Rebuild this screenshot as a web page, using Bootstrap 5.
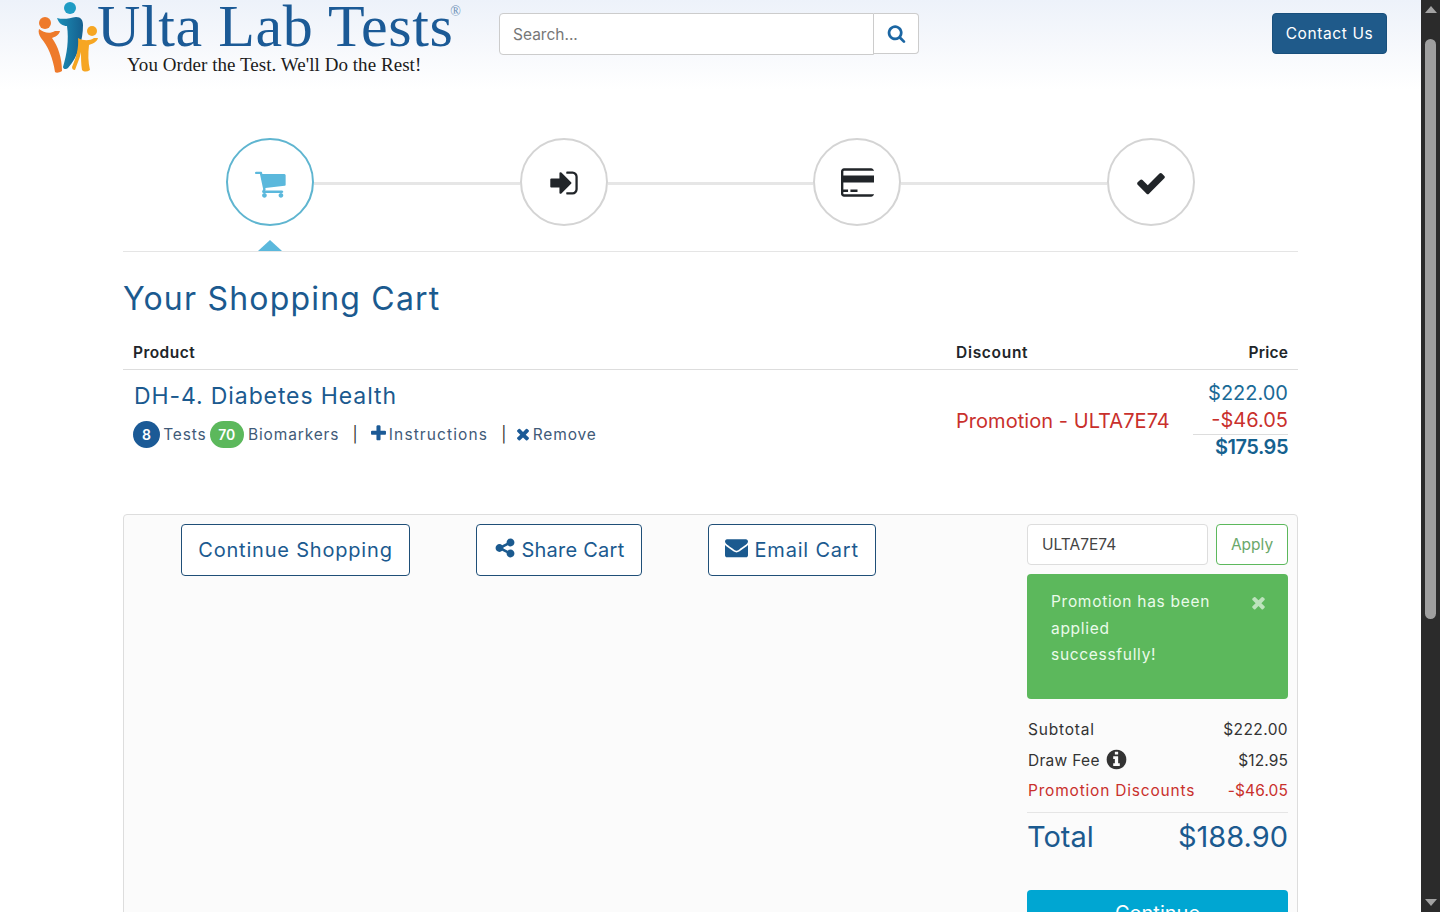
<!DOCTYPE html>
<html lang="en">
<head>
<meta charset="utf-8">
<title>Your Shopping Cart</title>
<link href="https://cdn.jsdelivr.net/npm/bootstrap@5.3.0/dist/css/bootstrap.min.css" rel="stylesheet">
<style>
html,body{height:912px;overflow:hidden}
body{font-family:Inter,"Noto Sans",sans-serif;background:#fff;color:#212529;font-size:16px}
svg.ico{fill:currentColor;display:inline-block;vertical-align:-2px}
.page-wrap{width:1421px}
.top-bar{height:90px;padding:13px 34px 0 38px;background:linear-gradient(#edf2fa,#f6f8fc 50%,#fff)}
.logo-box{width:461px;height:76px;margin-top:-13px;flex:none}
.logo-mark{width:60px;height:72px;margin-top:2px;flex:none}
.logo-words{font-family:"Liberation Serif",serif;margin-left:-1px}
.logo-name{font-size:60px;line-height:52px;color:#1b5a96;letter-spacing:.6px;white-space:nowrap}
.logo-name sup{font-size:14px;top:-30px;vertical-align:baseline;position:relative;margin-left:-3px;color:#6b8fb5}
.logo-tag{font-size:19px;line-height:20px;color:#1c1c1c;margin-left:30px;margin-top:3px;white-space:nowrap;letter-spacing:.05px}
.find-box{width:420px}
.find-box input{height:42px;font-size:15.5px;border-color:#ccc;border-radius:4px 0 0 4px;padding-left:13px;box-shadow:none}
.find-box input::placeholder{color:#777}
.find-btn{width:45px;height:41px;border:1px solid #ccc;border-left:0;background:#fff;border-radius:0 4px 4px 0;color:#1b66a3;padding:3px 0 0}
.contact-btn{width:115px;height:41px;background:#1f5a8a;border:1px solid #184f7c;color:#fff;font-size:15.5px;border-radius:4px;padding:0;letter-spacing:.6px}
.cart-wrap{width:1175px;margin:0 auto}
.step-row{padding:48px 103px 25px;border-bottom:1px solid #e5e5e5}
.step-dot{width:88px;height:88px;flex:none;border-radius:50%;border:2px solid #d4d4d4;background:#fff;color:#212529}
.step-dot.on{border-color:#5fb5d0;color:#5bb8dc}
.step-line{flex:1;height:3px;background:#e6e6e6;margin-top:2px}
.step-tip{position:absolute;left:30px;top:100px;width:0;height:0;border-left:12px solid transparent;border-right:12px solid transparent;border-bottom:11px solid #5bb8dc}
.cart-icon{margin-left:2px;margin-top:2px}
.step-ico{margin-top:2px}
.cart-title{font-size:32px;line-height:40px;color:#1b5a8f;font-weight:400;margin:27px 0 0;letter-spacing:1.2px}
.cart-table{margin:0;--bs-table-bg:transparent}
.cart-table th{font-size:15.5px;font-weight:600;padding:21px 10px 4px;line-height:25px;border-bottom:1px solid #ddd;color:#212529;letter-spacing:.45px}
.cart-table td{border:0;padding:10px;vertical-align:top}
.cart-table th.head-disc{width:247px;letter-spacing:.7px}
.cart-table th.head-price{width:105px;letter-spacing:.2px}
.prod-name{font-size:23px;line-height:32px;color:#1b5a8f;letter-spacing:.9px;padding-left:1px}
.meta-line{font-size:15.5px;color:#3f5a78;margin-top:9px;line-height:27px;letter-spacing:.85px;white-space:nowrap}
.meta-line a{color:#3f5a78;text-decoration:none}
.meta-line a.wide-link{letter-spacing:1.1px}
.meta-line svg{color:#1b5a96}
.count-pill{display:inline-block;height:27px;line-height:27px;min-width:27px;border-radius:14px;color:#fff;font-size:14px;font-weight:600;text-align:center;padding:0 8px;letter-spacing:0}
.pill-blue{background:#1b5a96;margin-right:-2px}
.pill-green{background:#5cb85c;width:34px;padding:0;margin-left:-2px;margin-right:-1px}
.bar-sep{margin:0 5px 0 8px;color:#333;letter-spacing:0}
.plus-ico{vertical-align:-3px!important;margin-left:1px;margin-right:1px}
.cross-ico{margin-left:-3px;margin-right:-4px;vertical-align:-3px!important}
.cart-table td.promo-name{color:#c9302c;font-size:20px;letter-spacing:.05px;padding-left:10px;vertical-align:middle;white-space:nowrap}
.cart-table td.price-stack{font-size:20px;line-height:27px;text-align:right;color:#1b6a96}
.price-stack .cut{color:#c9302c;border-bottom:1px solid #ddd;margin-left:-10px}
.price-stack b{font-weight:600;color:#15618f;letter-spacing:-.5px;display:block;margin-top:-1px}
.action-box{height:600px;margin-top:43px;background:#fbfbfb;border:1px solid #ddd;border-radius:4px 4px 0 0;padding:9px 9px 0 0}
.left-actions{padding-left:57px;gap:66px;flex:1}
.act-btn{height:52px;border:1px solid #1f4f78;border-radius:4px;background:#fff;color:#1b5a8f;font-size:20px;line-height:50px;padding:0;text-align:center;letter-spacing:.8px;white-space:nowrap}
.act-tight{letter-spacing:.25px}
.btn-w1{width:229px}
.btn-w2{width:166px}
.btn-w3{width:168px}
.side-col{width:261px;flex:none}
.code-input{width:181px;height:41px;font-size:15.5px;border-color:#ddd;border-radius:4px;padding-left:14px;color:#444;box-shadow:none}
.apply-btn{width:72px;height:41px;background:#fff;border:1px solid #5cb85c;border-radius:4px;color:#6aa86a;padding:0;font-size:15.5px}
.promo-alert{background:#5cb85c;color:#eafbea;border-radius:4px;margin-top:9px;height:125px;padding:15px 24px;font-size:15.5px;line-height:26.500px;letter-spacing:.7px}
.promo-alert .msg{width:175px}
.promo-x{color:#bde3bd;margin-top:4px;margin-right:-4px}
.sum-line{font-size:15.5px;line-height:24px;color:#333;padding-left:1px;letter-spacing:.8px}
.sum-line span:last-child{letter-spacing:.4px}
.sum-first{margin-top:19px}
.sum-draw{margin-top:6px;letter-spacing:.3px}
.sum-line.sum-draw span:last-child,.sum-line.sum-red span:last-child{letter-spacing:.1px}
.sum-draw span:first-child{letter-spacing:.3px}
.sum-red{color:#c9302c;margin-top:6px}
.sum-rule{border-top:1px solid #e5e5e5;margin-top:9px}
.sum-total{font-size:29px;line-height:48px;color:#1b5a8f}
.go-btn{height:60px;width:261px;margin-top:29px;background:#00a6d2;color:#fff;border:0;border-radius:4px;font-size:20px;padding:0 0 14px;display:block}
.info-ico{vertical-align:-5px!important;margin-left:1px}
.scroll-track{position:fixed;right:0;top:0;width:19px;height:912px;background:#2b2b2b}
.scroll-thumb{position:absolute;left:4px;right:4px;top:39px;height:580px;background:#9f9f9f;border-radius:6px}
.scroll-up,.scroll-down{position:absolute;left:4px;width:0;height:0;border-left:6px solid transparent;border-right:6px solid transparent}
.scroll-up{top:6px;border-bottom:7px solid #a3a3a3}
.scroll-down{bottom:6px;border-top:7px solid #a3a3a3}
</style>
</head>
<body>
<div class="page-wrap">
  <header class="top-bar d-flex align-items-start">
    <div class="logo-box d-flex">
      <svg class="logo-mark" viewBox="0 0 60 72" aria-hidden="true">
        <defs><linearGradient id="blueFig" x1="0" y1="0" x2="1" y2="0"><stop offset="0" stop-color="#1c8fb8"/><stop offset="1" stop-color="#155f8e"/></linearGradient></defs>
        <circle cx="7" cy="21" r="6" fill="#ee7a2b"/>
        <path d="M1 27C6 31 12 32 17 29L22 29C21 33 17 35 14 36 20 44 24 56 24 69 21 71 18 71 17 70 15 56 10 44 3 36 1 33 0 30 1 27Z" fill="#ee7a2b"/>
        <circle cx="32" cy="6" r="6" fill="#1f9cc4"/>
        <path d="M19 16C26 18 32 16 38 15 43 15 45 18 45 23 45 38 40 55 30 66 28 68 25 67 25 65 29 52 31 38 29 24 25 24 21 22 19 16Z" fill="url(#blueFig)"/>
        <circle cx="54" cy="29" r="5" fill="#f6a623"/>
        <path d="M40 36C45 39 52 39 56 36L60 36C59 40 54 42 51 43 50 52 50 60 52 68 49 70 46 70 44 68 43 62 43 56 43 50 42 56 39 62 37 68 35 68 34 67 34 65 38 56 41 46 40 36Z" fill="#f6a623"/>
      </svg>
      <div class="logo-words">
        <div class="logo-name">Ulta Lab Tests<sup>®</sup></div>
        <div class="logo-tag">You Order the Test. We'll Do the Rest!</div>
      </div>
    </div>
    <div class="find-box d-flex">
      <input class="form-control" type="text" placeholder="Search...">
      <button class="find-btn flex-shrink-0" type="button" aria-label="Search">
        <svg class="ico" width="19" height="19" viewBox="0 0 1792 1792"><path d="M1216 832q0-185-131.500-316.500t-316.500-131.500-316.500 131.500-131.500 316.500 131.500 316.500 316.500 131.500 316.500-131.500 131.500-316.500zm512 832q0 52-38 90t-90 38q-54 0-90-38l-343-342q-179 124-399 124-143 0-273.500-55.500t-225-150-150-225-55.500-273.500 55.500-273.500 150-225 225-150 273.500-55.500 273.500 55.500 225 150 150 225 55.500 273.500q0 220-124 399l343 343q37 37 37 90z"/></svg>
      </button>
    </div>
    <button class="contact-btn ms-auto" type="button">Contact Us</button>
  </header>

  <main class="cart-wrap">
    <div class="step-row d-flex align-items-center position-relative">
      <div class="step-dot on d-flex align-items-center justify-content-center position-relative">
        <svg class="cart-icon" width="33" height="33" viewBox="0 0 1792 1792" fill="currentColor"><path d="M640 1536q0 52-38 90t-90 38-90-38-38-90 38-90 90-38 90 38 38 90zm896 0q0 52-38 90t-90 38-90-38-38-90 38-90 90-38 90 38 38 90zm128-1088v512q0 24-16.500 42.500t-40.500 21.500l-1044 122q13 60 13 70 0 16-24 64h920q26 0 45 19t19 45-19 45-45 19h-1024q-26 0-45-19t-19-45q0-11 8-31.500t16-36 21.500-40 15.500-29.500l-177-823h-204q-26 0-45-19t-19-45 19-45 45-19h256q16 0 28.500 6.500t19.500 15.500 13 24.500 8 26 5.500 29.500 4.500 26h1201q26 0 45 19t19 45z"/></svg>
        <span class="step-tip"></span>
      </div>
      <div class="step-line"></div>
      <div class="step-dot d-flex align-items-center justify-content-center">
        <svg class="step-ico" width="32" height="32" viewBox="0 0 1792 1792" fill="currentColor"><path d="M1312 896q0 26-19 45l-544 544q-19 19-45 19t-45-19-19-45v-288h-448q-26 0-45-19t-19-45v-384q0-26 19-45t45-19h448v-288q0-26 19-45t45-19 45 19l544 544q19 19 19 45zm352-352v704q0 119-84.500 203.500t-203.500 84.500h-320q-13 0-22.500-9.500t-9.500-22.500q0-4-1-20t-.5-26.500 3-23.500 10-19.500 20.500-6.500h320q66 0 113-47t47-113v-704q0-66-47-113t-113-47h-312l-11.500-1-11.500-3-8-5.500-7-9-2-13.500q0-4-1-20t-.5-26.500 3-23.500 10-19.500 20.500-6.500h320q119 0 203.500 84.500t84.500 203.500z"/></svg>
      </div>
      <div class="step-line"></div>
      <div class="step-dot d-flex align-items-center justify-content-center">
        <svg width="33" height="33" viewBox="0 0 1792 1792" fill="currentColor"><path d="M1632 128q66 0 113 47t47 113v1216q0 66-47 113t-113 47h-1472q-66 0-113-47t-47-113v-1216q0-66 47-113t113-47h1472zm-1472 128q-13 0-22.500 9.500t-9.500 22.500v224h1664v-224q0-13-9.500-22.500t-22.500-9.500h-1600zm1600 1280q13 0 22.500-9.500t9.500-22.500v-608h-1664v608q0 13 9.500 22.500t22.500 9.500h1600zm-1632-128v-128h256v128h-256zm384 0v-128h384v128h-384z"/></svg>
      </div>
      <div class="step-line"></div>
      <div class="step-dot d-flex align-items-center justify-content-center">
        <svg class="step-ico" width="32" height="32" viewBox="0 0 1792 1792" fill="currentColor"><path d="M1671 566q0 40-28 68l-724 724-136 136q-28 28-68 28t-68-28l-136-136-362-362q-28-28-28-68t28-68l136-136q28-28 68-28t68 28l294 295 656-657q28-28 68-28t68 28l136 136q28 28 28 68z"/></svg>
      </div>
    </div>

    <h1 class="cart-title">Your Shopping Cart</h1>

    <table class="table cart-table">
      <thead>
        <tr><th>Product</th><th class="head-disc">Discount</th><th class="text-end head-price">Price</th></tr>
      </thead>
      <tbody>
        <tr>
          <td>
            <div class="prod-name">DH-4. Diabetes Health</div>
            <div class="meta-line">
              <span class="count-pill pill-blue">8</span> Tests <span class="count-pill pill-green">70</span> Biomarkers
              <span class="bar-sep">|</span>
              <a class="wide-link" href="#"><svg class="ico plus-ico" width="19" height="19" viewBox="0 0 1792 1792"><path d="M1600 736v192q0 40-28 68t-68 28h-416v416q0 40-28 68t-68 28h-192q-40 0-68-28t-28-68v-416h-416q-40 0-68-28t-28-68v-192q0-40 28-68t68-28h416v-416q0-40 28-68t68-28h192q40 0 68 28t28 68v416h416q40 0 68 28t28 68z"/></svg>Instructions</a>
              <span class="bar-sep">|</span>
              <a href="#"><svg class="ico cross-ico" width="18" height="18" viewBox="0 0 1792 1792"><path d="M1490 1322q0 40-28 68l-136 136q-28 28-68 28t-68-28l-294-294-294 294q-28 28-68 28t-68-28l-136-136q-28-28-28-68t28-68l294-294-294-294q-28-28-28-68t28-68l136-136q28-28 68-28t68 28l294 294 294-294q28-28 68-28t68 28l136 136q28 28 28 68t-28 68l-294 294 294 294q28 28 28 68z"/></svg> Remove</a>
            </div>
          </td>
          <td class="promo-name">Promotion - ULTA7E74</td>
          <td class="price-stack"><div>$222.00</div><div class="cut">-$46.05</div><div><b>$175.95</b></div></td>
        </tr>
      </tbody>
    </table>

    <section class="action-box d-flex align-items-start">
      <div class="left-actions d-flex">
        <a class="act-btn btn-w1 text-decoration-none" href="#">Continue Shopping</a>
        <a class="act-btn act-tight btn-w2 text-decoration-none" href="#"><svg class="ico" width="22" height="22" viewBox="0 0 1792 1792"><path d="M1344 1024q133 0 226.500 93.500t93.500 226.500-93.500 226.500-226.500 93.500-226.500-93.500-93.500-226.500q0-12 2-34l-360-180q-92 86-218 86-133 0-226.500-93.500t-93.500-226.500 93.500-226.500 226.500-93.500q126 0 218 86l360-180q-2-22-2-34 0-133 93.500-226.500t226.500-93.500 226.500 93.500 93.500 226.500-93.500 226.500-226.500 93.500q-126 0-218-86l-360 180q2 22 2 34t-2 34l360 180q92-86 218-86z"/></svg> Share Cart</a>
        <a class="act-btn btn-w3 text-decoration-none" href="#"><svg class="ico" width="23" height="23" viewBox="0 0 1792 1792"><path d="M1792 710v794q0 66-47 113t-113 47h-1472q-66 0-113-47t-47-113v-794q44 49 101 87 362 246 497 345 57 42 92.500 65.500t94.500 48 110 24.500h2q51 0 110-24.500t94.500-48 92.500-65.500q170-123 498-345 57-39 100-87zm0-294q0 79-49 151t-122 123q-376 261-468 325-10 7-42.500 30.500t-54 38-52 32.500-57.500 27-50 9h-2q-23 0-50-9t-57.500-27-52-32.500-54-38-42.500-30.500q-91-64-262-182.500t-205-142.500q-62-42-117-115.500t-55-136.500q0-78 41.500-130t118.500-52h1472q65 0 112.500 47t47.500 113z"/></svg> Email Cart</a>
      </div>
      <div class="side-col">
        <div class="d-flex justify-content-between">
          <input class="form-control code-input" type="text" value="ULTA7E74">
          <button class="apply-btn" type="button">Apply</button>
        </div>
        <div class="promo-alert d-flex justify-content-between align-items-start">
          <div class="msg">Promotion has been applied<br>successfully!</div>
          <svg class="promo-x" width="19" height="19" viewBox="0 0 1792 1792" fill="currentColor"><path d="M1490 1322q0 40-28 68l-136 136q-28 28-68 28t-68-28l-294-294-294 294q-28 28-68 28t-68-28l-136-136q-28-28-28-68t28-68l294-294-294-294q-28-28-28-68t28-68l136-136q28-28 68-28t68 28l294 294 294-294q28-28 68-28t68 28l136 136q28 28 28 68t-28 68l-294 294 294 294q28 28 28 68z"/></svg>
        </div>
        <div class="sum-line sum-first d-flex justify-content-between"><span>Subtotal</span><span>$222.00</span></div>
        <div class="sum-line sum-draw d-flex justify-content-between align-items-center"><span>Draw Fee <svg class="ico info-ico" width="23" height="23" viewBox="0 0 1792 1792"><path d="M1152 1376v-160q0-14-9-23t-23-9h-96v-512q0-14-9-23t-23-9h-320q-14 0-23 9t-9 23v160q0 14 9 23t23 9h96v320h-96q-14 0-23 9t-9 23v160q0 14 9 23t23 9h448q14 0 23-9t9-23zm-128-896v-160q0-14-9-23t-23-9h-192q-14 0-23 9t-9 23v160q0 14 9 23t23 9h192q14 0 23-9t9-23zm640 416q0 209-103 385.500t-279.500 279.500-385.500 103-385.500-103-279.500-279.500-103-385.500 103-385.500 279.500-279.500 385.500-103 385.500 103 279.500 279.500 103 385.500z"/></svg></span><span>$12.95</span></div>
        <div class="sum-line sum-red d-flex justify-content-between"><span>Promotion Discounts</span><span>-$46.05</span></div>
        <div class="sum-rule"></div>
        <div class="sum-total d-flex justify-content-between"><span>Total</span><span>$188.90</span></div>
        <button class="go-btn" type="button">Continue</button>
      </div>
    </section>
  </main>
</div>
<div class="scroll-track" aria-hidden="true"><span class="scroll-up"></span><span class="scroll-thumb"></span><span class="scroll-down"></span></div>
</body>
</html>
